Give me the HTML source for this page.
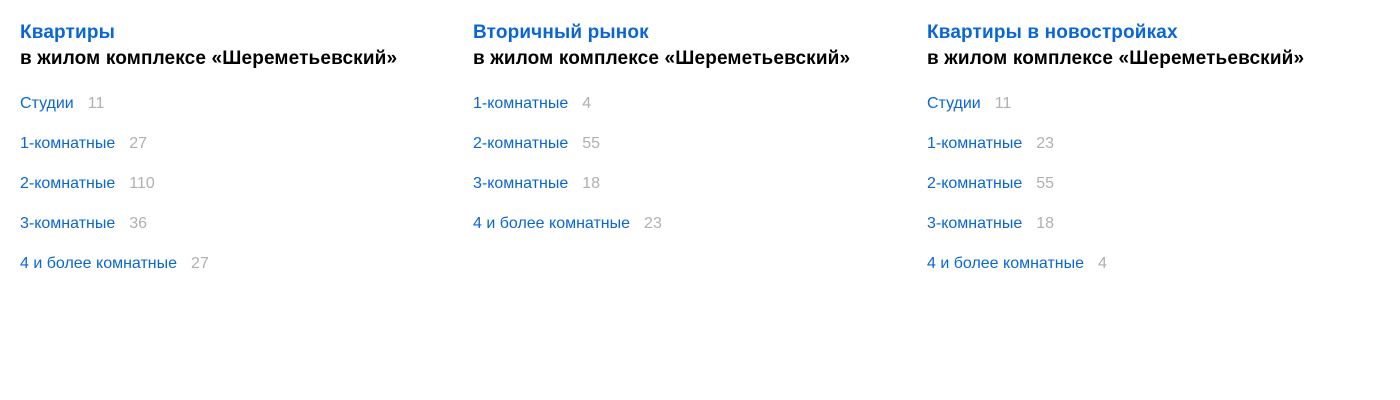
<!DOCTYPE html>
<html><head><meta charset="utf-8"><style>
body{margin:0;width:1400px;height:400px;background:#fff;font-family:"Liberation Sans",sans-serif;position:relative;overflow:hidden}
.col{position:absolute;top:20px;width:440px}
.t1{color:#0a66d8;font-size:19px;font-weight:bold;line-height:26px;letter-spacing:0.15px}
.t2{color:#000;font-size:19px;font-weight:bold;line-height:26px;letter-spacing:0.15px;white-space:nowrap}
ul{list-style:none;margin:0;padding:0;margin-top:21px}
li{height:40px;line-height:22px;font-size:16px;color:#0a66d8;white-space:nowrap}
li span{color:#b0b0b0;margin-left:14px}
</style></head><body>
<div class="col" style="left:20px">
<div class="t1">Квартиры</div><div class="t2">в жилом комплексе «Шереметьевский»</div>
<ul><li>Студии<span>11</span></li><li>1-комнатные<span>27</span></li><li>2-комнатные<span>110</span></li><li>3-комнатные<span>36</span></li><li>4 и более комнатные<span>27</span></li></ul>
</div>
<div class="col" style="left:473px">
<div class="t1">Вторичный рынок</div><div class="t2">в жилом комплексе «Шереметьевский»</div>
<ul><li>1-комнатные<span>4</span></li><li>2-комнатные<span>55</span></li><li>3-комнатные<span>18</span></li><li>4 и более комнатные<span>23</span></li></ul>
</div>
<div class="col" style="left:927px">
<div class="t1">Квартиры в новостройках</div><div class="t2">в жилом комплексе «Шереметьевский»</div>
<ul><li>Студии<span>11</span></li><li>1-комнатные<span>23</span></li><li>2-комнатные<span>55</span></li><li>3-комнатные<span>18</span></li><li>4 и более комнатные<span>4</span></li></ul>
</div>
</body></html>
